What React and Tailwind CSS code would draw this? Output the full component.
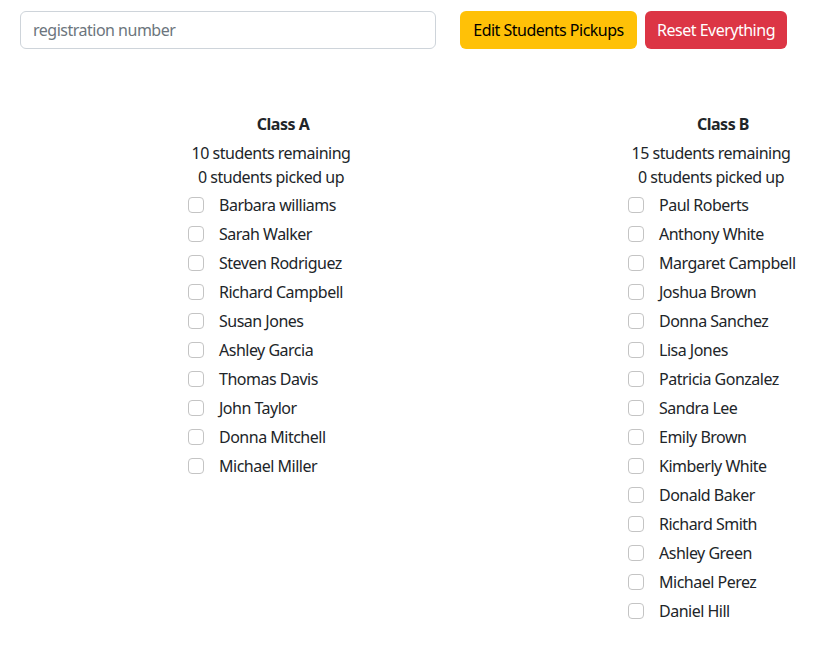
const classA = [
  "Barbara williams",
  "Sarah Walker",
  "Steven Rodriguez",
  "Richard Campbell",
  "Susan Jones",
  "Ashley Garcia",
  "Thomas Davis",
  "John Taylor",
  "Donna Mitchell",
  "Michael Miller",
];

const classB = [
  "Paul Roberts",
  "Anthony White",
  "Margaret Campbell",
  "Joshua Brown",
  "Donna Sanchez",
  "Lisa Jones",
  "Patricia Gonzalez",
  "Sandra Lee",
  "Emily Brown",
  "Kimberly White",
  "Donald Baker",
  "Richard Smith",
  "Ashley Green",
  "Michael Perez",
  "Daniel Hill",
];

function ClassColumn({ name, students }) {
  return (
    <div className="w-[166px]">
      <h3 className="whitespace-nowrap pl-6 text-center font-bold leading-6">{name}</h3>
      <p className="mt-[5px] whitespace-nowrap text-center leading-6">
        {students.length} students remaining
      </p>
      <p className="whitespace-nowrap text-center leading-6">0 students picked up</p>
      <ul className="mt-[1px]">
        {students.map((s) => (
          <li key={s} className="flex h-[29px] items-center whitespace-nowrap">
            <span className="h-4 w-4 shrink-0 rounded-[4px] border border-[#c4c4c4] bg-white" />
            <span className="ml-[15px]">{s}</span>
          </li>
        ))}
      </ul>
    </div>
  );
}

export default function App() {
  return (
    <div
      className="min-h-screen bg-white px-5 pt-[11px] text-[16px] tracking-[-0.5px] text-[#212529]"
      style={{ fontFamily: '"Noto Sans", "Open Sans", sans-serif' }}
    >
      <div className="flex items-center">
        <input
          type="text"
          placeholder="registration number"
          className="h-[38px] w-[416px] rounded-[6px] border border-[#ced4da] px-3 text-[16px] tracking-[-0.5px] placeholder:text-[#6c757d] outline-none"
        />
        <button className="ml-6 h-[38px] w-[177px] rounded-[6px] bg-[#ffc107] text-black">
          Edit Students Pickups
        </button>
        <button className="ml-2 h-[38px] w-[142px] rounded-[6px] bg-[#dc3545] text-white">
          Reset Everything
        </button>
      </div>

      <div className="mt-[63px] flex gap-[274px] pl-[168px]">
        <ClassColumn name="Class A" students={classA} />
        <ClassColumn name="Class B" students={classB} />
      </div>
    </div>
  );
}
